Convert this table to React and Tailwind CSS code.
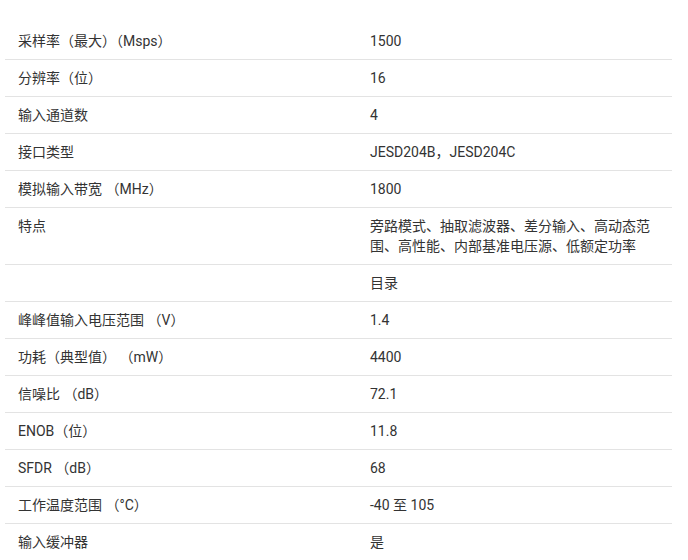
import React from "react";

const rows = [
    ["采样率（最大）（Msps）", "1500"],
    ["分辨率（位）", "16"],
    ["输入通道数", "4"],
    ["接口类型", "JESD204B，JESD204C"],
    ["模拟输入带宽 （MHz）", "1800"],
    ["特点", "旁路模式、抽取滤波器、差分输入、高动态范围、高性能、内部基准电压源、低额定功率"],
    ["", "目录"],
    ["峰峰值输入电压范围 （V）", "1.4"],
    ["功耗（典型值） （mW）", "4400"],
    ["信噪比 （dB）", "72.1"],
    ["ENOB（位）", "11.8"],
    ["SFDR （dB）", "68"],
    ["工作温度范围 （°C）", "-40 至 105"],
    ["输入缓冲器", "是"],
];

export default function App() {
    return (
        <div
            className="bg-white pt-[23px] px-[5px] w-[688px] h-[560px] overflow-hidden text-[14px] leading-5 text-[#333]"
            style={{ fontFamily: 'Roboto, "Noto Sans CJK SC", sans-serif' }}
        >
            <div className="w-[667px]">
                {rows.map(([label, value], i) => (
                    <div
                        key={i}
                        className="grid grid-cols-[352px_1fr] border-b border-[#e3e3e3]"
                    >
                        <div className="px-[13px] py-2">{label}</div>
                        <div className="px-[13px] py-2">{value}</div>
                    </div>
                ))}
            </div>
        </div>
    );
}
